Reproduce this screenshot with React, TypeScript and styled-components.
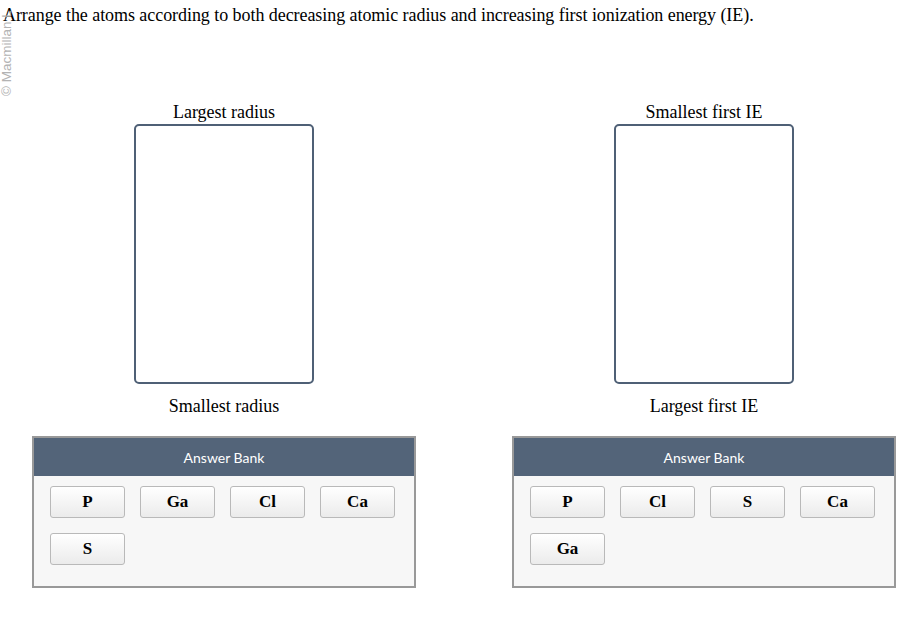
import React from "react";
import styled, { createGlobalStyle } from "styled-components";

const GlobalStyle = createGlobalStyle`
  html, body {
    margin: 0;
    padding: 0;
    background: #ffffff;
  }
  body {
    font-family: "Liberation Serif", "Times New Roman", serif;
    color: #000;
  }
`;

const Page = styled.div`
  position: relative;
  width: 912px;
  height: 617px;
  overflow: hidden;
  padding: 4px 0 0 3px;
  box-sizing: border-box;
`;

// rotated copyright strip on the left edge, sits under the prompt
const Watermark = styled.div`
  position: absolute;
  left: 0;
  top: 96px;
  transform-origin: 0 0;
  transform: rotate(-90deg);
  font-family: "Liberation Sans", Arial, sans-serif;
  font-size: 13.5px;
  line-height: 14px;
  color: #b3b3b3;
  white-space: nowrap;
  pointer-events: none;
`;

const Prompt = styled.p`
  margin: 0;
  font-size: 18px;
  line-height: 22px;
  letter-spacing: -0.06px;
`;

const Columns = styled.div`
  display: grid;
  grid-template-columns: 384px 384px;
  column-gap: 96px;
  margin: 75px 0 0 29px;
`;

const Column = styled.div`
  display: flex;
  flex-direction: column;
  align-items: center;
`;

const ZoneLabel = styled.div`
  font-size: 18px;
  line-height: 22px;
  height: 22px;
`;

const DropZone = styled.div`
  width: 180px;
  height: 260px;
  box-sizing: border-box;
  border: 2px solid #4f6076;
  border-radius: 5px;
  background: #fff;
  margin: 1px 0 11px;
`;

const Bank = styled.div`
  align-self: stretch;
  margin-top: 19px;
  border: 2px solid #999999;
  background: #f7f7f7;
  height: 152px;
  box-sizing: border-box;
`;

const BankHeader = styled.div`
  height: 38px;
  background: #536479;
  color: #ffffff;
  font-family: Lato, "Open Sans", sans-serif;
  font-size: 14px;
  display: flex;
  align-items: center;
  justify-content: center;
`;

const Tiles = styled.div`
  display: grid;
  grid-template-columns: repeat(4, 75px);
  grid-auto-rows: 32px;
  gap: 15px;
  padding: 10px 16px;
`;

const Tile = styled.div`
  box-sizing: border-box;
  border: 1px solid #b9b9b9;
  border-radius: 3px;
  background: linear-gradient(#ffffff, #ebebeb);
  font-weight: bold;
  font-size: 17px;
  display: flex;
  align-items: center;
  justify-content: center;
`;

const sorts = [
  {
    top: "Largest radius",
    bottom: "Smallest radius",
    atoms: ["P", "Ga", "Cl", "Ca", "S"],
  },
  {
    top: "Smallest first IE",
    bottom: "Largest first IE",
    atoms: ["P", "Cl", "S", "Ca", "Ga"],
  },
];

const App = () => {
  return (
    <>
      <GlobalStyle />
      <Page>
        <Watermark>© Macmillan L</Watermark>
        <Prompt>
          Arrange the atoms according to both decreasing atomic radius and
          increasing first ionization energy (IE).
        </Prompt>
        <Columns>
          {sorts.map((s) => (
            <Column key={s.top}>
              <ZoneLabel>{s.top}</ZoneLabel>
              <DropZone />
              <ZoneLabel>{s.bottom}</ZoneLabel>
              <Bank>
                <BankHeader>Answer Bank</BankHeader>
                <Tiles>
                  {s.atoms.map((a) => (
                    <Tile key={a}>{a}</Tile>
                  ))}
                </Tiles>
              </Bank>
            </Column>
          ))}
        </Columns>
      </Page>
    </>
  );
};

export default App;
